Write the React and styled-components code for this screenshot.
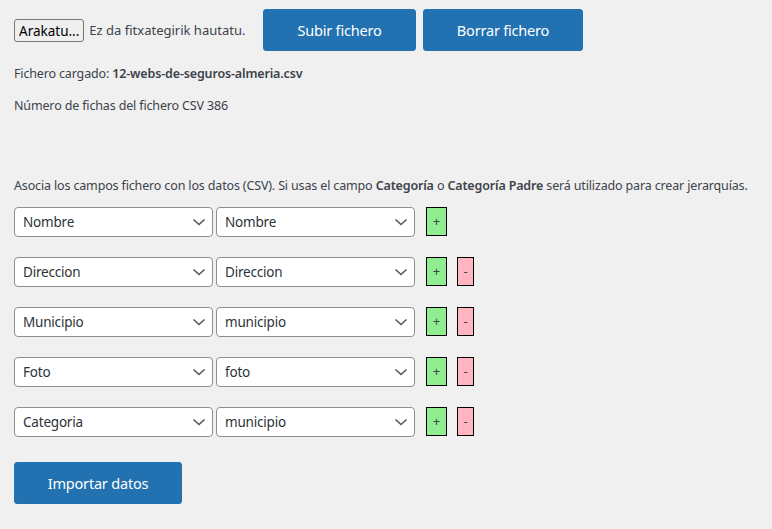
import React from 'react';
import styled, { createGlobalStyle } from 'styled-components';

const GlobalStyle = createGlobalStyle`
    html, body {
        margin: 0;
        padding: 0;
        background: #f0f0f1;
    }
    body {
        font-family: "Noto Sans", "Open Sans", sans-serif;
        color: #3c434a;
        font-size: 13px;
    }
`;

const mappings = [
    { field: 'Nombre', column: 'Nombre', removable: false },
    { field: 'Direccion', column: 'Direccion', removable: true },
    { field: 'Municipio', column: 'municipio', removable: true },
    { field: 'Foto', column: 'foto', removable: true },
    { field: 'Categoria', column: 'municipio', removable: true }
];

const Chevron = () => (
    <ChevronIcon width="14" height="8" viewBox="0 0 14 8">
        <path d="M1.5 1.5 L7 6.5 L12.5 1.5" fill="none" stroke="#50575e" strokeWidth="1.6" />
    </ChevronIcon>
);

const Select = ({ value }) => (
    <SelectBox>
        <SelectInput defaultValue={value}>
            <option>{value}</option>
        </SelectInput>
        <Chevron />
    </SelectBox>
);

export default class App extends React.Component {
    render() {
        return (
            <Page>
                <GlobalStyle />
                <TopBar>
                    <FileBox>
                        <FileButton type="button">Arakatu...</FileButton>
                        <FileLabel>Ez da fitxategirik hautatu.</FileLabel>
                    </FileBox>
                    <PrimaryButton wide={153}>Subir fichero</PrimaryButton>
                    <PrimaryButton wide={160}>Borrar fichero</PrimaryButton>
                </TopBar>

                <Info>Fichero cargado: <strong>12-webs-de-seguros-almeria.csv</strong></Info>
                <Info>Número de fichas del fichero CSV 386</Info>

                <Intro>
                    Asocia los campos fichero con los datos (CSV). Si usas el campo <strong>Categoría</strong> o <strong>Categoría Padre</strong> será utilizado para crear jerarquías.
                </Intro>

                <Rows>
                    {mappings.map((m, i) => (
                        <Row key={i}>
                            <Select value={m.field} />
                            <Select value={m.column} />
                            <Actions>
                                <SmallButton kind="add">+</SmallButton>
                                {m.removable && <SmallButton kind="remove">-</SmallButton>}
                            </Actions>
                        </Row>
                    ))}
                </Rows>

                <PrimaryButton wide={168}>Importar datos</PrimaryButton>
            </Page>
        );
    }
};

const Page = styled("div")`
    padding: 9px 14px 20px 14px;
`;

const TopBar = styled("div")`
    display: flex;
    align-items: center;
    gap: 7px;
`;

const FileBox = styled("div")`
    width: 242px;
    display: flex;
    align-items: center;
    gap: 5px;
`;

const FileButton = styled("button")`
    font-family: "Noto Sans", sans-serif;
    font-size: 13.5px;
    color: #000;
    background: #efefef;
    border: 1px solid #767676;
    border-radius: 3px;
    height: 23px;
    padding: 0 4px;
    margin-top: 1px;
`;

const FileLabel = styled("span")`
    font-size: 13px;
    color: #3c434a;
    white-space: nowrap;
`;

const PrimaryButton = styled("button")`
    width: ${props => props.wide}px;
    height: 42px;
    background: #2271b1;
    border: 1px solid #2271b1;
    border-radius: 3px;
    color: #fff;
    font-family: "Noto Sans", sans-serif;
    font-size: 14.5px;
    letter-spacing: -0.2px;
    cursor: pointer;
`;

const Info = styled("p")`
    margin: 0;
    line-height: 20px;
    font-size: 12.5px;
    letter-spacing: -0.15px;
    &:first-of-type {
        margin-top: 13px;
    }
    & + & {
        margin-top: 12px;
    }
    strong {
        font-weight: 600;
    }
`;

const Intro = styled("p")`
    margin: 60px 0 0 0;
    line-height: 20px;
    font-size: 12.5px;
    letter-spacing: -0.15px;
    white-space: nowrap;
    strong {
        font-weight: 600;
    }
`;

const Rows = styled("div")`
    margin-top: 11px;
    margin-bottom: 25px;
    display: flex;
    flex-direction: column;
    gap: 20px;
`;

const Row = styled("div")`
    display: flex;
    align-items: center;
    gap: 3px;
    height: 30px;
`;

const SelectBox = styled("div")`
    position: relative;
    width: 199px;
    height: 30px;
`;

const SelectInput = styled("select")`
    appearance: none;
    width: 100%;
    height: 30px;
    box-sizing: border-box;
    padding: 0 24px 0 8px;
    background: #fff;
    border: 1px solid #8c8f94;
    border-radius: 4px;
    color: #2c3338;
    font-family: "Noto Sans", sans-serif;
    font-size: 13.5px;
    letter-spacing: -0.2px;
`;

const ChevronIcon = styled("svg")`
    position: absolute;
    right: 7px;
    top: 11px;
    pointer-events: none;
`;

const Actions = styled("div")`
    display: flex;
    gap: 10px;
    margin-left: 8px;
    padding-bottom: 2px;
`;

const buttonColors = {
    "add": "#90ee90",
    "remove": "#ffb6c1"
};

const SmallButton = styled("button")`
    height: 29px;
    width: ${props => props.kind === 'add' ? 21 : 17}px;
    padding: 0;
    box-sizing: border-box;
    background: ${props => buttonColors[props.kind]};
    border: 1px solid #000;
    color: #3c434a;
    font-family: "Noto Sans", sans-serif;
    font-size: 13px;
`;
